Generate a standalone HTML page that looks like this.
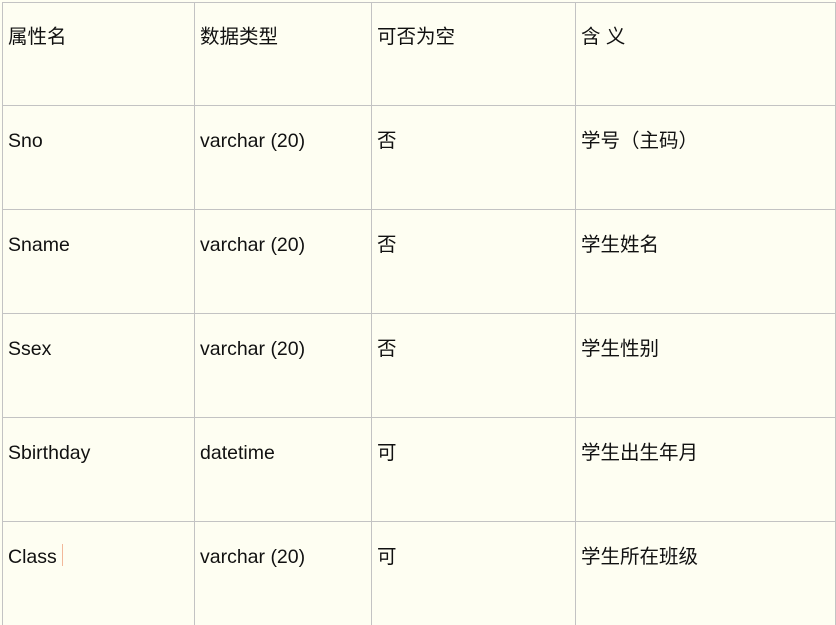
<!DOCTYPE html>
<html><head><meta charset="utf-8"><style>
html,body{margin:0;padding:0;background:#fefef2;width:836px;height:625px;overflow:hidden}
.l{position:absolute;background:#c3c3c3}
.t{position:absolute;font-family:"Liberation Sans","Noto Sans CJK SC",sans-serif;font-size:19.5px;color:#111;line-height:22px;white-space:nowrap}
</style></head><body>
<div class="l" style="left:2px;top:2px;width:834px;height:1px"></div>
<div class="l" style="left:2px;top:105px;width:834px;height:1px"></div>
<div class="l" style="left:2px;top:209px;width:834px;height:1px"></div>
<div class="l" style="left:2px;top:313px;width:834px;height:1px"></div>
<div class="l" style="left:2px;top:417px;width:834px;height:1px"></div>
<div class="l" style="left:2px;top:521px;width:834px;height:1px"></div>
<div class="l" style="left:2px;top:2px;width:1px;height:623px"></div>
<div class="l" style="left:194px;top:2px;width:1px;height:623px"></div>
<div class="l" style="left:371px;top:2px;width:1px;height:623px"></div>
<div class="l" style="left:575px;top:2px;width:1px;height:623px"></div>
<div class="l" style="left:835px;top:2px;width:1px;height:623px"></div>
<div class="l" style="left:62px;top:544px;width:1px;height:22px;background:#f2b89a"></div>

<div class="t" style="left:8px;top:26px">属性名</div>
<div class="t" style="left:200px;top:26px">数据类型</div>
<div class="t" style="left:377px;top:26px">可否为空</div>
<div class="t" style="left:581px;top:26px">含 义</div>

<div class="t" style="left:8px;top:130px">Sno</div>
<div class="t" style="left:200px;top:130px">varchar (20)</div>
<div class="t" style="left:377px;top:130px">否</div>
<div class="t" style="left:581px;top:130px">学号（主码）</div>

<div class="t" style="left:8px;top:234px">Sname</div>
<div class="t" style="left:200px;top:234px">varchar (20)</div>
<div class="t" style="left:377px;top:234px">否</div>
<div class="t" style="left:581px;top:234px">学生姓名</div>

<div class="t" style="left:8px;top:338px">Ssex</div>
<div class="t" style="left:200px;top:338px">varchar (20)</div>
<div class="t" style="left:377px;top:338px">否</div>
<div class="t" style="left:581px;top:338px">学生性别</div>

<div class="t" style="left:8px;top:442px">Sbirthday</div>
<div class="t" style="left:200px;top:442px">datetime</div>
<div class="t" style="left:377px;top:442px">可</div>
<div class="t" style="left:581px;top:442px">学生出生年月</div>

<div class="t" style="left:8px;top:546px">Class</div>
<div class="t" style="left:200px;top:546px">varchar (20)</div>
<div class="t" style="left:377px;top:546px">可</div>
<div class="t" style="left:581px;top:546px">学生所在班级</div>
</body></html>
